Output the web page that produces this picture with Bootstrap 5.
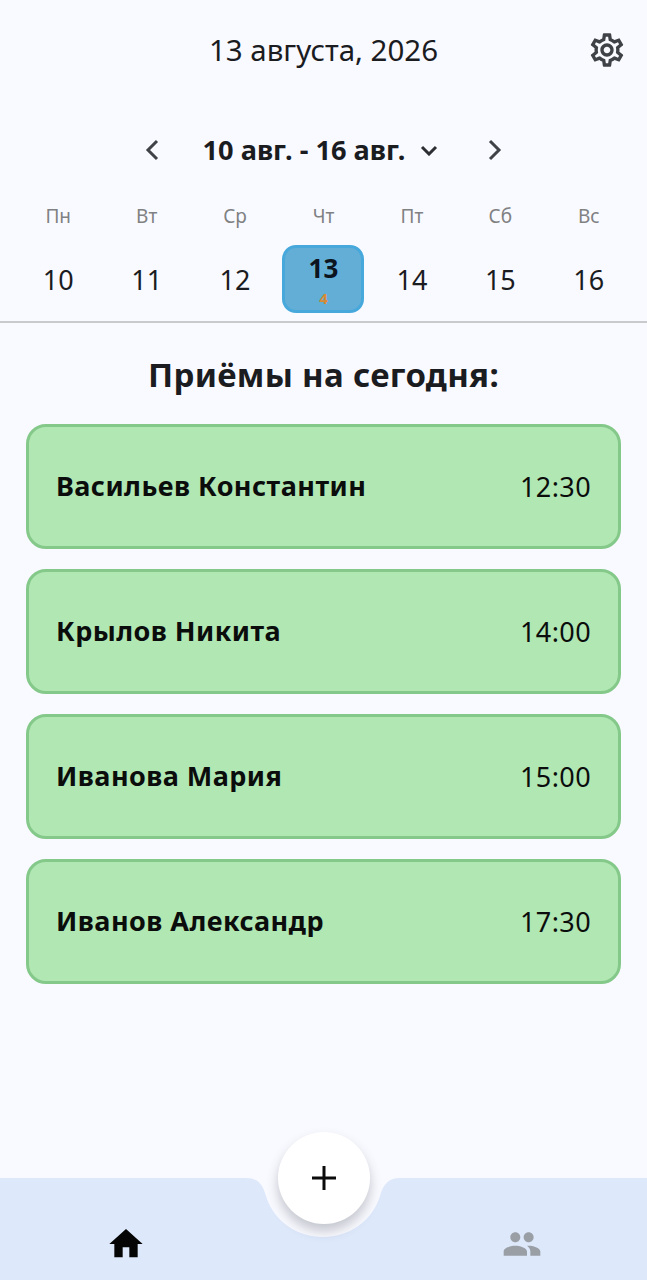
<!DOCTYPE html>
<html lang="ru">
<head>
    <meta charset="UTF-8">
    <meta name="viewport" content="width=device-width, initial-scale=1.0">
    <title>Приёмы</title>
    <link href="https://cdn.jsdelivr.net/npm/bootstrap@5.3.3/dist/css/bootstrap.min.css" rel="stylesheet">
    <script src="https://cdn.jsdelivr.net/npm/bootstrap@5.3.3/dist/js/bootstrap.bundle.min.js"></script>
    <style>
        body {
            background-color: #f9faff;
            font-family: "Noto Sans", sans-serif;
            color: #1b1c1f;
        }
        .app-screen { height: 1280px; }
        .top-bar { height: 100px; }
        .top-title { font-size: 29.5px; line-height: 40px; }
        .settings-icon { width: 40px; height: 40px; fill: #3f4247; right: 20px; }
        .week-nav { height: 40px; margin-top: 30px; gap: 44px; }
        .week-label { font-size: 27.2px; font-weight: 700; line-height: 40px; }
        .nav-arrow { width: 14px; height: 22px; fill: none; stroke: #3f4247; stroke-width: 3; }
        .nav-next { margin-left: 6px; }
        .caret-arrow { width: 18px; height: 11px; fill: none; stroke: #2c2e33; stroke-width: 3; margin-left: 15px; }
        .week-grid { padding: 0 14px; margin-top: 30px; }
        .day-name { font-size: 19px; line-height: 32px; color: #808183; text-align: center; }
        .day-cell { height: 68px; margin-top: 13px; font-size: 27px; text-align: center; line-height: 42px; padding-top: 14px; }
        .day-active {
            width: 82px;
            height: 68px;
            margin: 13px auto 0;
            padding-top: 3px;
            background-color: #63aed6;
            border: 3px solid #47a8dc;
            border-radius: 14px;
            font-weight: 700;
            font-size: 26px;
            line-height: 34px;
            text-align: center;
            color: #0c1420;
        }
        .day-count { font-size: 15px; line-height: 14px; margin-top: 6px; color: #d98a35; }
        .week-rule { height: 2px; margin-top: 8px; background-color: #c9cacc; }
        .list-title { font-size: 33px; font-weight: 700; line-height: 44px; margin: 30px 0 27px; letter-spacing: .3px; }
        .visits { padding: 0 26px; gap: 20px; }
        .visit-card {
            height: 125px;
            padding: 0 27px;
            background-color: #b1e7b3;
            border: 3px solid #84c98a;
            border-radius: 20px;
            color: #0b0d0c;
        }
        .visit-name { font-size: 27px; font-weight: 700; letter-spacing: .45px; }
        .visit-time { font-size: 27px; letter-spacing: .4px; padding-top: 2px; }
        .bottom-bar { height: 102px; }
        .bar-shape { width: 647px; height: 102px; fill: #dde8fb; }
        .add-btn {
            position: absolute;
            left: 278px;
            top: -46px;
            width: 92px;
            height: 92px;
            background-color: #fff;
            border-radius: 50%;
            box-shadow: 0 7px 12px rgba(60, 65, 80, .28);
        }
        .add-btn svg { width: 24px; height: 24px; stroke: #0b0b0b; stroke-width: 3; }
        .tab-icon { position: absolute; width: 40px; height: 40px; top: 46px; }
        .tab-home { left: 106px; fill: #050505; }
        .tab-people { left: 502px; fill: #9a9fa5; }
    </style>
</head>
<body>
    <div class="app-screen d-flex flex-column">
        <header class="top-bar d-flex align-items-center position-relative">
            <div class="top-title flex-grow-1 text-center">13 августа, 2026</div>
            <svg class="settings-icon position-absolute top-50 translate-middle-y" viewBox="0 0 24 24"><path d="M19.43 12.98c.04-.32.07-.64.07-.98 0-.34-.03-.66-.07-.98l2.11-1.65c.19-.15.24-.42.12-.64l-2-3.46c-.09-.16-.26-.25-.44-.25-.06 0-.12.01-.17.03l-2.49 1c-.52-.4-1.08-.73-1.69-.98l-.38-2.65C14.46 2.18 14.25 2 14 2h-4c-.25 0-.46.18-.49.42l-.38 2.65c-.61.25-1.17.59-1.69.98l-2.49-1c-.06-.02-.12-.03-.18-.03-.17 0-.34.09-.43.25l-2 3.46c-.13.22-.07.49.12.64l2.11 1.65c-.04.32-.07.65-.07.98 0 .33.03.66.07.98l-2.11 1.65c-.19.15-.24.42-.12.64l2 3.46c.09.16.26.25.44.25.06 0 .12-.01.17-.03l2.49-1c.52.4 1.08.73 1.69.98l.38 2.65c.03.24.24.42.49.42h4c.25 0 .46-.18.49-.42l.38-2.65c.61-.25 1.17-.59 1.69-.98l2.49 1c.06.02.12.03.18.03.17 0 .34-.09.43-.25l2-3.46c.12-.22.07-.49-.12-.64l-2.11-1.65zm-1.98-1.71c.04.31.05.52.05.73 0 .21-.02.43-.05.73l-.14 1.13.89.7 1.08.84-.7 1.21-1.27-.51-1.04-.42-.9.68c-.43.32-.84.56-1.25.73l-1.06.43-.16 1.13-.2 1.35h-1.4l-.19-1.35-.16-1.13-1.06-.43c-.43-.18-.83-.41-1.23-.71l-.91-.7-1.06.43-1.27.51-.7-1.21 1.08-.84.89-.7-.14-1.13c-.03-.31-.05-.54-.05-.74s.02-.43.05-.73l.14-1.13-.89-.7-1.08-.84.7-1.21 1.27.51 1.04.42.9-.68c.43-.32.84-.56 1.25-.73l1.06-.43.16-1.13.2-1.35h1.39l.19 1.35.16 1.13 1.06.43c.43.18.83.41 1.23.71l.91.7 1.06-.43 1.27-.51.7 1.21-1.07.85-.89.7.14 1.13zM12 8c-2.21 0-4 1.79-4 4s1.79 4 4 4 4-1.79 4-4-1.79-4-4-4zm0 6c-1.1 0-2-.9-2-2s.9-2 2-2 2 .9 2 2-.9 2-2 2z"/></svg>
        </header>

        <div class="week-nav d-flex justify-content-center align-items-center">
            <svg class="nav-arrow" viewBox="0 0 14 22"><path d="M12 2 3 11l9 9"/></svg>
            <div class="d-flex align-items-center">
                <span class="week-label">10 авг. - 16 авг.</span>
                <svg class="caret-arrow" viewBox="0 0 18 11"><path d="M2 2l7 7 7-7"/></svg>
            </div>
            <svg class="nav-arrow nav-next" viewBox="0 0 14 22"><path d="M2 2l9 9-9 9"/></svg>
        </div>

        <div class="week-grid" id="week-grid"></div>
        <div class="week-rule"></div>

        <h1 class="list-title text-center">Приёмы на сегодня:</h1>
        <div class="visits d-flex flex-column" id="visits"></div>

        <nav class="bottom-bar position-relative mt-auto">
            <svg class="bar-shape d-block" viewBox="0 0 647 102"><path d="M0 0H246C258 0 263 7 266 18C274 44 298 59 323 59C348 59 372 44 380 18C383 7 388 0 400 0H647V102H0Z"/></svg>
            <svg class="tab-icon tab-home" viewBox="0 0 24 24"><path d="M10 20v-6h4v6h5v-8h3L12 3 2 12h3v8z"/></svg>
            <svg class="tab-icon tab-people" viewBox="0 0 24 24"><path d="M16 11c1.66 0 2.99-1.34 2.99-3S17.66 5 16 5c-1.66 0-3 1.34-3 3s1.34 3 3 3zm-8 0c1.66 0 2.99-1.34 2.99-3S9.66 5 8 5C6.34 5 5 6.34 5 8s1.34 3 3 3zm0 2c-2.33 0-7 1.17-7 3.5V19h14v-2.5c0-2.33-4.67-3.5-7-3.5zm8 0c-.29 0-.62.02-.97.05 1.16.84 1.97 1.97 1.97 3.45V19h6v-2.5c0-2.33-4.67-3.5-7-3.5z"/></svg>
            <div class="add-btn d-flex align-items-center justify-content-center">
                <svg viewBox="0 0 24 24"><path d="M12 0v24M0 12h24"/></svg>
            </div>
        </nav>
    </div>

    <script>
        const days = [
            ['Пн', 10], ['Вт', 11], ['Ср', 12], ['Чт', 13], ['Пт', 14], ['Сб', 15], ['Вс', 16]
        ];
        const visits = [
            ['Васильев Константин', '12:30'],
            ['Крылов Никита', '14:00'],
            ['Иванова Мария', '15:00'],
            ['Иванов Александр', '17:30']
        ];

        function renderWeek() {
            let names = '';
            let nums = '';
            days.forEach(function (d) {
                names += `<div class="col day-name">${d[0]}</div>`;
                if (d[1] === 13) {
                    nums += `<div class="col"><div class="day-active"><div>${d[1]}</div><div class="day-count">4</div></div></div>`;
                } else {
                    nums += `<div class="col day-cell">${d[1]}</div>`;
                }
            });
            document.getElementById('week-grid').innerHTML =
                `<div class="row g-0">${names}</div><div class="row g-0 week-days">${nums}</div>`;
        }

        function renderVisits() {
            const box = document.getElementById('visits');
            box.innerHTML = visits.map(function (v) {
                return `<div class="visit-card d-flex align-items-center justify-content-between">
                    <span class="visit-name">${v[0]}</span><span class="visit-time">${v[1]}</span>
                </div>`;
            }).join('');
        }

        renderWeek();
        renderVisits();
    </script>
</body>
</html>
